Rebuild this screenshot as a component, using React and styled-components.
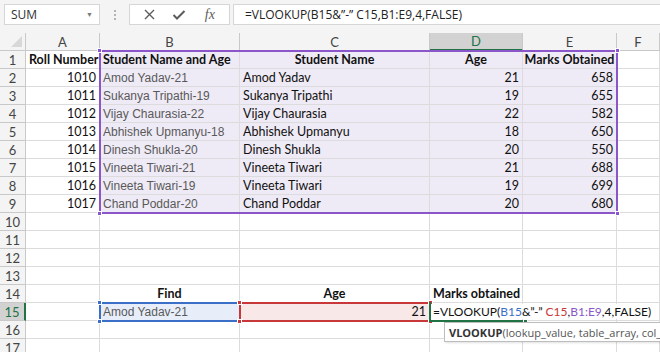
import React from 'react';
import styled, { createGlobalStyle, css } from 'styled-components';

const GlobalStyle = createGlobalStyle`
    html, body {
        margin: 0;
        padding: 0;
        background: #ffffff;
        overflow: hidden;
    }
    * {
        box-sizing: border-box;
    }
`;

const Page = styled.div`
    width: 660px;
    height: 352px;
    overflow: hidden;
    background: #ffffff;
    font-family: 'Lato', 'Liberation Sans', sans-serif;
`;

/* formula bar */

const FormulaBar = styled.div`
    height: 33px;
    display: flex;
    align-items: flex-start;
    padding: 4px 0 0 4px;
    background: #f4f4f4;
    font-family: 'Open Sans', 'Liberation Sans', sans-serif;
`;

const NameBox = styled.div`
    width: 96px;
    height: 21px;
    display: flex;
    align-items: center;
    justify-content: space-between;
    padding: 0 6px 0 6px;
    background: #ffffff;
    border: 1px solid #d6d6d6;
    font-size: 12px;
    color: #333;
    .caret {
        font-size: 7px;
        color: #7a7a7a;
    }
`;

const Grip = styled.div`
    width: 29px;
    height: 21px;
    display: flex;
    flex-direction: column;
    align-items: center;
    justify-content: center;
    gap: 2px;
    span {
        width: 2px;
        height: 2px;
        background: #b4b4b4;
    }
`;

const ButtonBox = styled.div`
    width: 101px;
    height: 21px;
    display: flex;
    align-items: center;
    justify-content: space-around;
    padding: 0 4px;
    background: #ffffff;
    border: 1px solid #d6d6d6;
    margin-right: 3px;
`;

const IconButton = styled.span`
    display: flex;
    align-items: center;
    justify-content: center;
    width: 24px;
    height: 18px;
    color: #5c5c5c;
    font-family: 'Liberation Serif', serif;
    font-style: italic;
    font-size: 14px;
`;

const FormulaInput = styled.div`
    flex: 1;
    height: 21px;
    display: flex;
    align-items: center;
    padding-left: 11px;
    background: #ffffff;
    border: 1px solid #d6d6d6;
    border-right: none;
    font-size: 12px;
    color: #222;
    white-space: nowrap;
`;

/* sheet */

const SheetWrap = styled.div`
    position: relative;
`;

const Sheet = styled.div`
    display: grid;
    grid-template-columns: 26px 74px 140px 190px 93px 94px 1fr;
    grid-auto-rows: 18px;
`;

const Corner = styled.div`
    background: #f4f4f4;
    border-right: 1px solid #c9c9c9;
    border-bottom: 1px solid #c9c9c9;
    position: relative;
    &::after {
        content: '';
        position: absolute;
        right: 3px;
        bottom: 3px;
        border-left: 11px solid transparent;
        border-bottom: 11px solid #d8d8d8;
    }
`;

const Head = styled.div`
    display: flex;
    align-items: center;
    justify-content: center;
    background: ${(p) => (p.$active ? '#d2d2d2' : '#f4f4f4')};
    color: ${(p) => (p.$active ? '#217346' : '#444')};
    border-right: 1px solid #c9c9c9;
    border-bottom: 1px solid #c9c9c9;
    font-size: 13px;
    ${(p) =>
        p.$active &&
        p.$col &&
        css`
            border-bottom: 2px solid #217346;
        `}
    ${(p) =>
        p.$active &&
        !p.$col &&
        css`
            border-right: 2px solid #217346;
        `}
`;

const Cell = styled.div`
    display: flex;
    align-items: center;
    justify-content: ${(p) =>
        p.$align === 'right' ? 'flex-end' : p.$align === 'center' ? 'center' : 'flex-start'};
    padding: 0 3px;
    border-right: 1px solid #dcdcdc;
    border-bottom: 1px solid #dcdcdc;
    background: ${(p) => p.$fill || '#ffffff'};
    font-size: 12.5px;
    font-weight: ${(p) => (p.$bold ? 700 : 400)};
    color: #111;
    white-space: nowrap;
    overflow: ${(p) => (p.$overflow ? 'visible' : 'hidden')};
    ${(p) =>
        p.$arial &&
        css`
            font-family: 'Liberation Sans', Arial, sans-serif;
            font-size: 12px;
            color: #595959;
        `}
`;

const Overflow = styled.span`
    position: relative;
    z-index: 2;
    background: #ffffff;
    padding-right: 8px;
    font-size: 12px;
    .b {
        color: #3b6fc7;
    }
    .c {
        color: #c8373a;
    }
    .p {
        color: #8a56c9;
    }
`;

const RangeBox = styled.div`
    position: absolute;
    left: ${(p) => p.$x - 1}px;
    top: ${(p) => p.$y - 1}px;
    width: ${(p) => p.$w + 2}px;
    height: ${(p) => p.$h + 2}px;
    border: 2px solid ${(p) => p.$color};
    ${(p) =>
        p.$edit &&
        css`
            border-top: none;
            border-right: none;
        `}
    pointer-events: none;
    z-index: 3;
`;

const Handle = styled.span`
    position: absolute;
    width: 5px;
    height: 5px;
    background: ${(p) => p.$color};
    border: 1px solid #ffffff;
    ${(p) => (p.$top ? 'top: -4px;' : 'bottom: -4px;')}
    ${(p) => (p.$left ? 'left: -4px;' : 'right: -4px;')}
`;

const Tooltip = styled.div`
    position: absolute;
    left: 444px;
    top: 289px;
    height: 20px;
    width: 240px;
    display: flex;
    align-items: center;
    padding-left: 4px;
    background: #ffffff;
    border: 1px solid #bdbdbd;
    box-shadow: 1px 1px 2px rgba(0, 0, 0, 0.12);
    font-family: 'Open Sans', 'Liberation Sans', sans-serif;
    font-size: 11px;
    color: #555;
    white-space: nowrap;
    z-index: 5;
    b {
        color: #333;
    }
`;

const COLS = ['A', 'B', 'C', 'D', 'E', 'F'];
const PURPLE = '#8a56c9';
const PURPLE_FILL = '#efebf6';
const BLUE = '#3b6fc7';
const RED = '#c8373a';
const GREEN = '#217346';

const students = [
    [1010, 'Amod Yadav', 21, 658],
    [1011, 'Sukanya Tripathi', 19, 655],
    [1012, 'Vijay Chaurasia', 22, 582],
    [1013, 'Abhishek Upmanyu', 18, 650],
    [1014, 'Dinesh Shukla', 20, 550],
    [1015, 'Vineeta Tiwari', 21, 688],
    [1016, 'Vineeta Tiwari', 19, 699],
    [1017, 'Chand Poddar', 20, 680],
];

const CloseIcon = () => (
    <svg width="13" height="13" viewBox="0 0 13 13">
        <path d="M2 2 L11 11 M11 2 L2 11" stroke="#5c5c5c" strokeWidth="1.4" fill="none" />
    </svg>
);

const CheckIcon = () => (
    <svg width="14" height="12" viewBox="0 0 14 12">
        <path d="M1.5 6 L5 9.5 L12.5 2" stroke="#5c5c5c" strokeWidth="2" fill="none" />
    </svg>
);

const Corners = ({ color }) => (
    <>
        <Handle $top $left $color={color} />
        <Handle $top $color={color} />
        <Handle $left $color={color} />
        <Handle $color={color} />
    </>
);

const emptyRow = (n, extra = {}) => (
    <React.Fragment key={n}>
        <Head $active={n === 15}>{n}</Head>
        {COLS.map((c) => (
            <Cell key={c} {...(extra[c] || {})}>
                {extra[c] && extra[c].text}
            </Cell>
        ))}
    </React.Fragment>
);

const App = () => {
    const rows = [];

    rows.push(
        <React.Fragment key={1}>
            <Head>1</Head>
            <Cell $bold>Roll Number</Cell>
            <Cell $bold $fill={PURPLE_FILL}>Student Name and Age</Cell>
            <Cell $bold $align="center" $fill={PURPLE_FILL}>Student Name</Cell>
            <Cell $bold $align="center" $fill={PURPLE_FILL}>Age</Cell>
            <Cell $bold $align="center" $fill={PURPLE_FILL}>Marks Obtained</Cell>
            <Cell />
        </React.Fragment>
    );

    students.forEach(([roll, name, age, marks], i) => {
        rows.push(
            <React.Fragment key={i + 2}>
                <Head>{i + 2}</Head>
                <Cell $align="right">{roll}</Cell>
                <Cell $arial $fill={PURPLE_FILL}>
                    {name}-{age}
                </Cell>
                <Cell $fill={PURPLE_FILL}>{name}</Cell>
                <Cell $align="right" $fill={PURPLE_FILL}>
                    {age}
                </Cell>
                <Cell $align="right" $fill={PURPLE_FILL}>
                    {marks}
                </Cell>
                <Cell />
            </React.Fragment>
        );
    });

    [10, 11, 12, 13].forEach((n) => rows.push(emptyRow(n)));

    rows.push(
        emptyRow(14, {
            B: { $bold: true, $align: 'center', text: 'Find' },
            C: { $bold: true, $align: 'center', text: 'Age' },
            D: { $bold: true, $overflow: true, text: 'Marks obtained' },
        })
    );

    rows.push(
        <React.Fragment key={15}>
            <Head $active>15</Head>
            <Cell />
            <Cell $arial $fill="#e8eef9">Amod Yadav-21</Cell>
            <Cell $align="right" $fill="#f9e8e8">21</Cell>
            <Cell $overflow>
                <Overflow>
                    =VLOOKUP(<span className="b">B15</span>&amp;”-” <span className="c">C15</span>,
                    <span className="p">B1:E9</span>,4,FALSE)
                </Overflow>
            </Cell>
            <Cell />
            <Cell />
        </React.Fragment>
    );

    [16, 17].forEach((n) => rows.push(emptyRow(n)));

    return (
        <Page>
            <GlobalStyle />
            <FormulaBar>
                <NameBox>
                    SUM <span className="caret">▼</span>
                </NameBox>
                <Grip>
                    <span />
                    <span />
                    <span />
                </Grip>
                <ButtonBox>
                    <IconButton>
                        <CloseIcon />
                    </IconButton>
                    <IconButton>
                        <CheckIcon />
                    </IconButton>
                    <IconButton>fx</IconButton>
                </ButtonBox>
                <FormulaInput>=VLOOKUP(B15&amp;”-” C15,B1:E9,4,FALSE)</FormulaInput>
            </FormulaBar>
            <SheetWrap>
                <Sheet>
                    <Corner />
                    {COLS.map((c) => (
                        <Head key={c} $col $active={c === 'D'}>
                            {c}
                        </Head>
                    ))}
                    {rows}
                </Sheet>
                <RangeBox $x={100} $y={18} $w={517} $h={162} $color={PURPLE}>
                    <Corners color={PURPLE} />
                </RangeBox>
                <RangeBox $x={100} $y={270} $w={140} $h={18} $color={BLUE}>
                    <Corners color={BLUE} />
                </RangeBox>
                <RangeBox $x={240} $y={270} $w={190} $h={18} $color={RED}>
                    <Corners color={RED} />
                </RangeBox>
                <RangeBox $x={430} $y={270} $w={93} $h={18} $color={GREEN} $edit>
                    <Handle $color={GREEN} />
                </RangeBox>
                <Tooltip>
                    <b>VLOOKUP</b>(lookup_value, table_array, col_index_num, [range_lookup])
                </Tooltip>
            </SheetWrap>
        </Page>
    );
};

export default App;
